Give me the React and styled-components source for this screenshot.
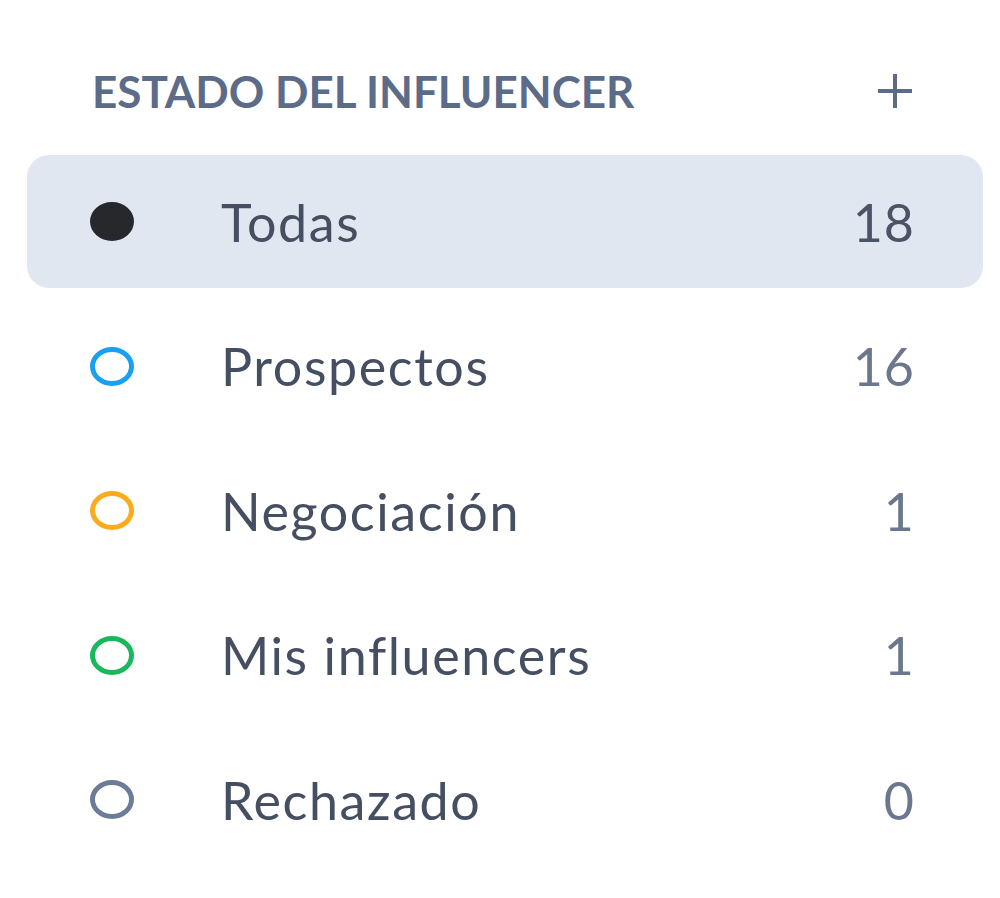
import styled, { createGlobalStyle } from "styled-components";

const GlobalStyle = createGlobalStyle`
  body {
    margin: 0;
    background: #ffffff;
    font-family: Lato, "Open Sans", sans-serif;
  }
`;

const Panel = styled.div`
  width: 1000px;
  height: 898px;
  box-sizing: border-box;
  padding: 56px 17px 0 27px;
`;

const Header = styled.div`
  display: flex;
  align-items: center;
  justify-content: space-between;
  height: 70px;
  padding: 0 68px 0 65px;
  margin-bottom: 29px;
`;

const Title = styled.div`
  font-size: 44px;
  font-weight: 700;
  letter-spacing: 0;
  color: #5b6b88;
  text-transform: uppercase;
`;

const AddButton = styled.button`
  border: none;
  background: none;
  padding: 0;
  width: 40px;
  height: 40px;
  display: flex;
  align-items: center;
  justify-content: center;
  color: #5b6b88;
  cursor: pointer;
`;

const List = styled.div`
  display: flex;
  flex-direction: column;
  gap: 11.5px;
`;

const Row = styled.div`
  display: flex;
  align-items: center;
  height: 133px;
  padding: 0 68px 0 63px;
  border-radius: 22px;
  background: ${(p) => (p.active ? "#e1e7f0" : "transparent")};
`;

const Dot = styled.span`
  width: 44px;
  height: 39px;
  box-sizing: border-box;
  border-radius: 50%;
  flex-shrink: 0;
  border: 5px solid ${(p) => p.color};
  background: ${(p) => (p.filled ? p.color : "transparent")};
`;

const Label = styled.span`
  margin-left: 87px;
  flex: 1;
  font-size: 52px;
  letter-spacing: 1.6px;
  color: #454f61;
`;

const Count = styled.span`
  font-size: 52px;
  letter-spacing: 1px;
  color: ${(p) => (p.active ? "#4a5466" : "#6b778c")};
`;

const items = [
  { label: "Todas", count: 18, color: "#26282c", filled: true },
  { label: "Prospectos", count: 16, color: "#1aa0f0" },
  { label: "Negociación", count: 1, color: "#fbab1c" },
  { label: "Mis influencers", count: 1, color: "#19b85c" },
  { label: "Rechazado", count: 0, color: "#6b7c99" },
];

export default function App() {
  return (
    <>
      <GlobalStyle />
      <Panel>
        <Header>
          <Title>Estado del influencer</Title>
          <AddButton aria-label="Añadir">
            <svg width="38" height="38" viewBox="0 0 38 38">
              <path d="M19 2v34M2 19h34" stroke="currentColor" strokeWidth="4" />
            </svg>
          </AddButton>
        </Header>
        <List>
          {items.map((item, i) => (
            <Row key={item.label} active={i === 0}>
              <Dot color={item.color} filled={item.filled} />
              <Label>{item.label}</Label>
              <Count active={i === 0}>{item.count}</Count>
            </Row>
          ))}
        </List>
      </Panel>
    </>
  );
}
